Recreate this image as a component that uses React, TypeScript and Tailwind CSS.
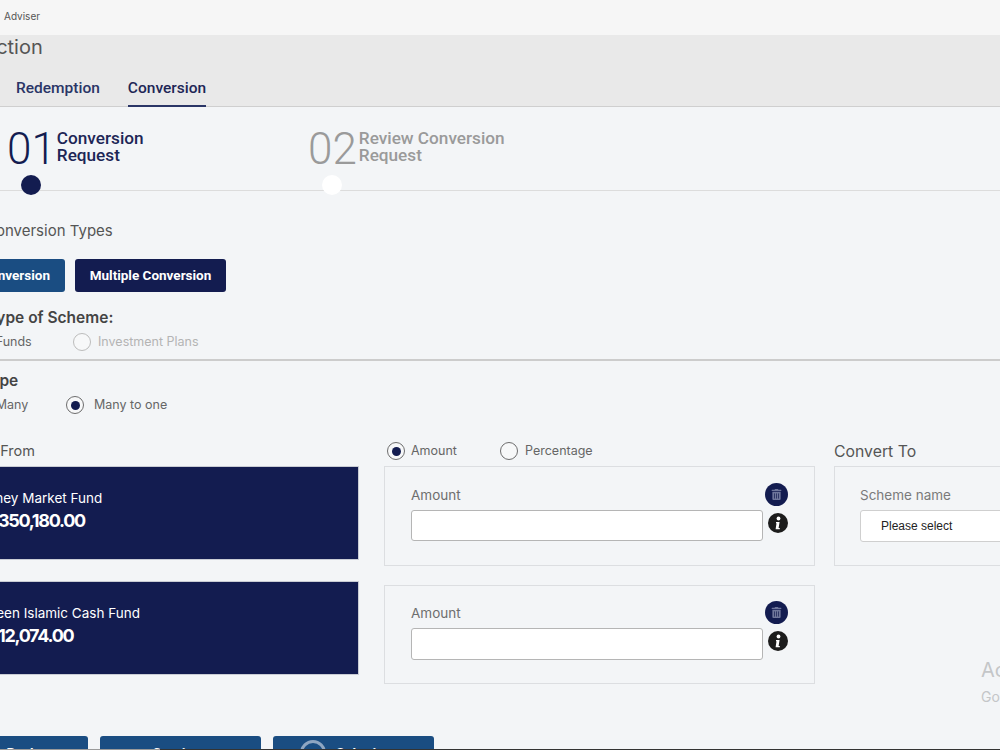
import React from 'react';
import { FaTrashAlt } from 'react-icons/fa';

const navy = 'bg-[#131c50]';

const Radio = ({ checked, dim }: { checked?: boolean; dim?: boolean }) => (
  <span className={`flex h-[18px] w-[18px] shrink-0 items-center justify-center rounded-full border-[1.5px] bg-[#f7f8f9] ${dim ? 'border-[#bcbcbc]' : 'border-[#6d6d6d]'}`}>
    {checked && <span className="h-[9px] w-[9px] rounded-full bg-[#131c50]" />}
  </span>
);

const FundCard = ({ name, value, top }: { name: string; value: string; top: string }) => (
  <div className={`h-[94px] w-[419px] border border-[#c9ccd4] ${navy} pl-[34px] ${top} whitespace-nowrap text-white`}>
    <div className="pt-[22px] text-[13.5px] leading-[18px]">{name}</div>
    <div className="-ml-[6px] mt-[2px] text-[18px] font-bold leading-[24px] tracking-[-1.3px]">{value}</div>
  </div>
);

const InfoDot = () => (
  <svg viewBox="0 0 20 20" className="h-[20px] w-[20px]">
    <circle cx="10" cy="10" r="10" fill="#1c1c1c" />
    <circle cx="10.5" cy="5.5" r="1.9" fill="#fff" />
    <path d="M8 9h3.6l-1 6h1.2v1.2H7.6l.9-6H8z" fill="#fff" />
  </svg>
);

const AmountBox = ({ h, top, inputH, pad }: { h: string; top: string; inputH: string; pad: string }) => (
  <div className={`${h} ${top} ${pad} w-[431px] border border-[#dcdee1] pl-[26px]`}>
    <div className="text-[13.5px] leading-[18px] text-[#6e6e6e]">Amount</div>
    <div className="flex items-start">
      <div className={`${inputH} mt-[6px] w-[352px] rounded-[3px] border border-[#b5b5b5] bg-white`} />
      <div className="relative">
        <span className="absolute left-[2px] top-[-21px] flex h-[23px] w-[23px] items-center justify-center rounded-full bg-[#131c50]">
          <FaTrashAlt size={11} className="text-[#6f769b]" />
        </span>
        <span className="absolute left-[5px] top-[9px]">
          <InfoDot />
        </span>
      </div>
    </div>
  </div>
);

export default function App() {
  return (
    <div className="relative h-[750px] w-[1000px] overflow-hidden bg-[#f3f5f7] font-['Inter',sans-serif] text-[#4a4a4a]">
      <div className="h-[35px] bg-[#f6f6f6] pl-[4px] pt-[9px] text-[10px] leading-[14px] text-[#555]">Adviser</div>

      <div className="h-[72px] border-b border-[#cfcfcf] bg-[#e9e9e9]">
        <div className="-ml-[68px] h-[25px] whitespace-nowrap text-[20px] leading-[24px] text-[#555]">Transaction</div>
        <div className="flex pl-[16px] pt-[16px] font-['Roboto',sans-serif] text-[15.5px] font-medium text-[#2a3566]">
          <div className="h-[31px] leading-[24px]">Redemption</div>
          <div className="ml-[28px] h-[31px] border-b-2 border-[#2a3566] leading-[24px] text-[#1d2656]">Conversion</div>
        </div>
      </div>

      <div className="relative h-[84px] border-b border-[#dcdcdc]">
        <div className="flex pt-[16px] font-['Roboto',sans-serif]">
          <div className="flex w-[308px] shrink-0 pl-[7px]">
            <span className="text-[44px] font-light leading-[52px] text-[#131c50]">01</span>
            <span className="ml-[1px] pt-[7px] text-[17.2px] font-medium leading-[17px] text-[#1d2656]">Conversion<br />Request</span>
          </div>
          <div className="flex">
            <span className="text-[44px] font-light leading-[52px] text-[#9a9a9a]">02</span>
            <span className="ml-[2px] pt-[7px] text-[17.2px] font-medium leading-[17px] text-[#9a9a9a]">Review Conversion<br />Request</span>
          </div>
        </div>
        <span className="absolute left-[21px] top-[68px] h-[20px] w-[20px] rounded-full bg-[#131c50]" />
        <span className="absolute left-[322px] top-[68px] h-[20px] w-[20px] rounded-full bg-white" />
      </div>

      <div className="-ml-[15px] whitespace-nowrap pt-[30px] text-[15px] leading-[20px] text-[#555]">Conversion Types</div>

      <div className="mt-[18px] flex font-['Roboto',sans-serif] text-[13.5px] font-bold text-white">
        <div className="-ml-[90px] flex h-[33px] w-[155px] shrink-0 items-center justify-end whitespace-nowrap rounded-[3px] bg-[#1a4d82] pr-[15px]">Single Conversion</div>
        <div className={`ml-[10px] flex h-[33px] w-[151px] shrink-0 items-center justify-center rounded-[3px] ${navy}`}>Multiple Conversion</div>
      </div>

      <div className="-ml-[13px] mt-[15px] whitespace-nowrap text-[15.5px] font-semibold leading-[22px] text-[#444]">Type of Scheme:</div>
      <div className="mt-[3px] flex h-[20px] items-center text-[12.5px]">
        <div className="-ml-[48px] w-[121px] shrink-0 whitespace-nowrap text-[#666]">Mutual Funds</div>
        <Radio dim />
        <span className="ml-[7px] text-[#b4b4b4]">Investment Plans</span>
      </div>
      <div className="mt-[7px] h-[2px] bg-[#cccccc]" />

      <div className="-ml-[19px] mt-[9px] text-[15.5px] font-semibold leading-[22px] text-[#444]">Type</div>
      <div className="mt-[3px] flex h-[20px] items-center text-[12.5px]">
        <div className="-ml-[47px] w-[113px] shrink-0 whitespace-nowrap text-[#666]">One to Many</div>
        <Radio checked />
        <span className="ml-[10px] text-[#666]">Many to one</span>
      </div>

      <div className="mt-[26px] flex">
        <div className="-ml-[60px] w-[444px] shrink-0">
          <div className="h-[20px] whitespace-nowrap pl-[10px] text-[14.5px] leading-[20px] text-[#555]">Switch From</div>
          <div className="mt-[5px]">
            <FundCard name="Money Market Fund" value="RM 350,180.00" top="" />
            <FundCard name="Ameen Islamic Cash Fund" value="RM 12,074.00" top="mt-[21px]" />
          </div>
        </div>

        <div className="w-[450px] shrink-0">
          <div className="flex h-[20px] items-center text-[12.5px] text-[#666]">
            <span className="ml-[3px]"><Radio checked /></span>
            <span className="ml-[6px] w-[89px]">Amount</span>
            <Radio />
            <span className="ml-[7px]">Percentage</span>
          </div>
          <div className="mt-[5px]">
            <AmountBox h="h-[100px]" top="" inputH="h-[31px]" pad="pt-[19px]" />
            <AmountBox h="h-[99px]" top="mt-[19px]" inputH="h-[32px]" pad="pt-[18px]" />
          </div>
        </div>

        <div className="w-[300px] shrink-0">
          <div className="h-[20px] pt-[1px] text-[15.8px] leading-[20px] text-[#555]">Convert To</div>
          <div className="mt-[5px] h-[100px] w-[300px] border border-[#dcdee1] pl-[25px] pt-[19px]">
            <div className="text-[13.5px] leading-[18px] text-[#7a7a7a]">Scheme name</div>
            <div className="mt-[6px] flex h-[32px] w-[200px] items-center rounded-[3px] border border-[#cfcfcf] bg-white pl-[20px] font-['Liberation_Sans',sans-serif] text-[12px] text-[#222]">Please select</div>
          </div>
        </div>
      </div>

      <div className="mt-[52px] flex font-['Roboto',sans-serif] text-[14px] font-bold text-white">
        <div className="-ml-[72px] h-[40px] w-[160px] shrink-0 rounded-[3px] bg-[#1a4d82] pl-[28px] pt-[8px] text-center">Back</div>
        <div className="ml-[12px] h-[40px] w-[161px] shrink-0 rounded-[3px] bg-[#1a4d82] pt-[8px] text-center">Continue</div>
        <div className="ml-[12px] h-[40px] w-[161px] shrink-0 rounded-[3px] bg-[#1a4d82] pl-[63px] pt-[8px]">
          <span className="relative">
            <span className="absolute left-[-36px] top-[-6px] h-[26px] w-[26px] rounded-full border-[3px] border-[#8fa6c2]" />
            Submit
          </span>
        </div>
      </div>

      <div className="absolute left-[981px] top-[657px] whitespace-nowrap text-[20px] leading-[26px] text-[#c4c6c8]">Activate Windows</div>
      <div className="absolute left-[981px] top-[688px] whitespace-nowrap text-[14px] leading-[18px] text-[#c4c6c8]">Go to Settings</div>
      <div className="absolute bottom-0 left-0 h-[1px] w-[160px] bg-[#9a9a9a]" />
      <div className="absolute bottom-0 left-[160px] right-0 h-[1px] bg-[#333]" />
    </div>
  );
}
